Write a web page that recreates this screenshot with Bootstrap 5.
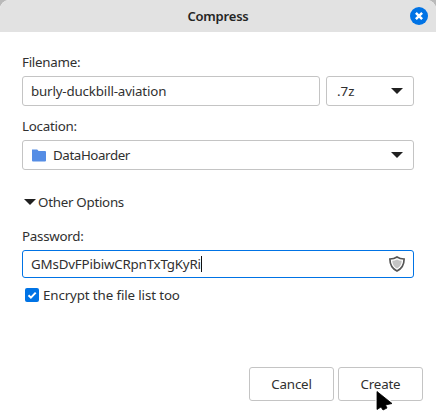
<!DOCTYPE html>
<html lang="en">
<head>
<meta charset="utf-8">
<meta name="viewport" content="width=device-width, initial-scale=1">
<title>Compress</title>
<link href="https://cdn.jsdelivr.net/npm/bootstrap@5.3.0/dist/css/bootstrap.min.css" rel="stylesheet">
<style>
  body { font: 13.33px/20px "Noto Sans", "Open Sans", sans-serif; color: #303030; background: #b9b9b9; }
  .dialog { width: 436px; height: 414px; background: #fff; border-radius: 9px 9px 0 0; overflow: hidden; }
  .titlebar { height: 32px; background: #e2e2e2; }
  .titlebar h1 { font-size: 13px; line-height: 20px; font-weight: 600; color: #252525; letter-spacing: -.2px; }
  .close-btn { position: absolute; right: 8px; top: 7px; width: 18px; height: 18px; line-height: 0; }
  .options { padding: 20px 22px 0; }
  .field { height: 30px; padding: 0 8px; font-size: inherit; line-height: 20px; border: 1px solid #c4c4c4; border-radius: 3px; color: #303030; background: #fff; }
  .format { width: 88px; padding-left: 10px; }
  .name-row { gap: 6px; }
  .gap-field { margin-top: 4px; }
  .group-next { margin-top: 10px; }
  .pass-label { margin-top: 14px; }
  .field.active-field { height: 28px; border-color: #0073e5; }
  .caret { width: 1px; height: 16px; background: #111; }
  .arrow { width: 12px; height: 6px; margin-right: 2px; }
  .expander { margin-top: 22px; padding-left: 2px; }
  .check-row { margin-top: 7px; padding-left: 3px; }
  .actions { margin-top: auto; padding: 0 13px 13px; gap: 4px; }
  .actions .btn { width: 85px; height: 34px; padding: 0; font-size: inherit; line-height: 32px; border: 1px solid #c4c4c4; border-radius: 3px; background: #fff; color: #303030; }
  .pointer { position: absolute; left: 374px; top: 388px; }
  svg { display: block; flex: none; }
  .folder { margin-right: 7px; }
  .t-label { letter-spacing: -.25px; }
  .t-name { letter-spacing: -.16px; }
  .t-folder { letter-spacing: -.4px; }
  .t-other { letter-spacing: -.27px; }
  .t-secret { letter-spacing: -.18px; }
  .t-enc { letter-spacing: -.12px; }
  .t-btn { letter-spacing: -.2px; }
</style>
</head>
<body>
<main class="dialog position-relative d-flex flex-column">
  <header class="titlebar d-flex align-items-center justify-content-center">
    <h1 class="m-0">Compress</h1>
    <button class="close-btn btn p-0 border-0" aria-label="Close">
      <svg width="18" height="18" viewBox="0 0 18 18"><circle cx="9" cy="9" r="9" fill="#0073e5"/><path d="M5.900 5.900l6.200 6.200M12.100 5.900l-6.200 6.200" stroke="#fff" stroke-width="2.500"/></svg>
    </button>
  </header>
  <section class="options">
    <label class="d-block"><span class="t-label">Filename:</span></label>
    <div class="name-row gap-field d-flex">
      <div class="field flex-grow-1 d-flex align-items-center"><span class="t-name">burly-duckbill-aviation</span></div>
      <div class="field format d-flex align-items-center justify-content-between"><span>.7z</span>
        <svg class="arrow" viewBox="0 0 12 6"><path d="M0 0h12L6 6z" fill="#202020"/></svg></div>
    </div>
    <label class="d-block group-next"><span class="t-label">Location:</span></label>
    <div class="field gap-field d-flex align-items-center">
      <svg class="folder" width="15" height="13" viewBox="0 0 15 13"><path d="M1 .5h5.200L7.600 2H14A1 1 0 0 1 15 3v8.500a1 1 0 0 1-1 1H2a1 1 0 0 1-1-1V.5z" fill="#558de5"/></svg>
      <span class="t-folder">DataHoarder</span>
      <svg class="arrow ms-auto" viewBox="0 0 12 6"><path d="M0 0h12L6 6z" fill="#202020"/></svg>
    </div>
    <div class="expander d-flex align-items-center">
      <svg class="arrow" viewBox="0 0 12 6"><path d="M0 0h12L6 6z" fill="#202020"/></svg>
      <span class="t-other">Other Options</span>
    </div>
    <label class="d-block pass-label"><span class="t-label">Password:</span></label>
    <div class="field active-field gap-field d-flex align-items-center">
      <span class="t-secret">GMsDvFPibiwCRpnTxTgKyRi</span><span class="caret"></span>
      <svg class="ms-auto" width="16" height="16" viewBox="0 0 16 16"><path d="M8 1C6 2.400 3.800 3 .9 3c0 5.500 2 9.500 7.100 12 5.100-2.500 7.100-6.500 7.100-12C12.200 3 10 2.400 8 1z" fill="#fff" stroke="#555" stroke-width="1.700"/><path d="M8 3.400C6.600 4.200 5 4.600 3.200 4.700c.2 3.700 1.900 6.400 4.800 7.900 2.900-1.500 4.600-4.200 4.800-7.900C11 4.600 9.400 4.200 8 3.400z" fill="#c4c4c4"/></svg>
    </div>
    <label class="check-row d-flex align-items-center">
      <svg width="14" height="14" viewBox="0 0 14 14"><rect width="14" height="14" rx="2" fill="#0073e5"/><path d="M3.500 7.300l2.400 2.300 4.800-5" fill="none" stroke="#fff" stroke-width="2"/></svg>
      <span class="t-enc ms-1">Encrypt the file list too</span>
    </label>
  </section>
  <footer class="actions d-flex justify-content-end">
    <button class="btn"><span class="t-btn">Cancel</span></button>
    <button class="btn"><span class="t-btn">Create</span></button>
  </footer>
  <svg class="pointer" width="22" height="26" viewBox="0 0 22 26"><path d="M3 3.500v18l4-2.500L9 22l4-2-1.500-3 6.500-1.500z" fill="#000" stroke="#fff" stroke-width="3" stroke-linejoin="round"/><path d="M3 3.500v18l4-2.500L9 22l4-2-1.500-3 6.500-1.500z" fill="#000" stroke="#000" stroke-width=".8" stroke-linejoin="round"/></svg>
</main>
<script src="https://cdn.jsdelivr.net/npm/bootstrap@5.3.0/dist/js/bootstrap.bundle.min.js"></script>
</body>
</html>
